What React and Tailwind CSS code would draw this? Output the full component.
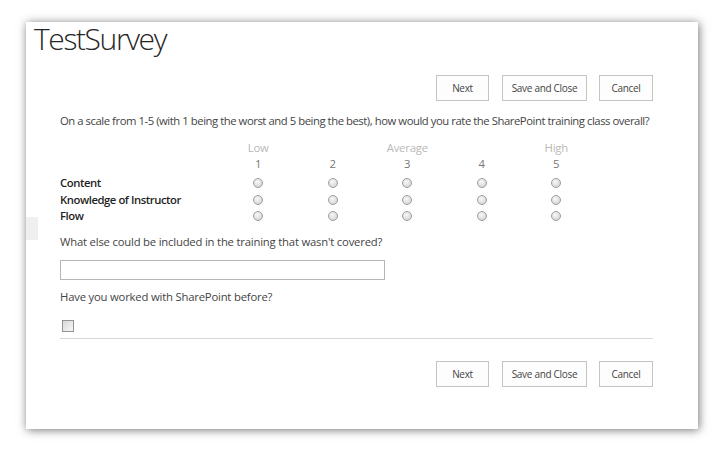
import React from "react";

const font = { fontFamily: '"Open Sans", "Noto Sans", sans-serif' };

function Buttons() {
  return (
    <div className="flex justify-end text-[10px] tracking-[-0.3px] text-[#444]">
      <button className="w-[53px] h-[26px] border border-[#c4c4c4] bg-[#fdfdfd]">
        Next
      </button>
      <button className="ml-[13px] w-[85px] h-[26px] border border-[#c4c4c4] bg-[#fdfdfd]">
        Save and Close
      </button>
      <button className="ml-[12px] w-[54px] h-[26px] border border-[#c4c4c4] bg-[#fdfdfd]">
        Cancel
      </button>
    </div>
  );
}

function Radio() {
  return (
    <div className="flex justify-center items-center">
      <span className="block w-[10px] h-[10px] rounded-full border border-[#9c9c9c] bg-[radial-gradient(circle_at_40%_35%,#f8f8f8,#cdcdcd)]" />
    </div>
  );
}

const rows = ["Content", "Knowledge of Instructor", "Flow"];

function App() {
  return (
    <div className="w-[728px] h-[453px] bg-white pt-[22px] pl-[26px]" style={font}>
      <div className="relative w-[672px] h-[407px] bg-white shadow-[1px_1px_9px_rgba(0,0,0,0.55)]">
        <div className="absolute left-0 top-[195px] w-[12px] h-[23px] bg-[#efefef]" />

        <h1 className="pt-[1px] pl-[8px] text-[30px] leading-[32px] tracking-[-1.4px] font-light text-[#262626]">
          TestSurvey
        </h1>

        <div className="pl-[34px] pr-[45px] text-[11.3px] tracking-[-0.2px]">
          <div className="mt-[20px]">
            <Buttons />
          </div>

          <p className="mt-[12px] leading-[16px] whitespace-nowrap tracking-[-0.45px] text-[#444]">
            On a scale from 1-5 (with 1 being the worst and 5 being the best), how would you rate the SharePoint training class overall?
          </p>

          <div className="mt-[11px] grid grid-cols-[161px_repeat(5,74.5px)]">
            <div className="h-[16px]" />
            <div className="text-center leading-[16px] text-[#b8b8b8]">Low</div>
            <div />
            <div className="text-center leading-[16px] text-[#b8b8b8]">Average</div>
            <div />
            <div className="text-center leading-[16px] text-[#b8b8b8]">High</div>

            <div className="h-[19px]" />
            {[1, 2, 3, 4, 5].map((n) => (
              <div key={n} className="text-center leading-[16px] text-[#777]">
                {n}
              </div>
            ))}

            {rows.map((r) => (
              <React.Fragment key={r}>
                <div className="h-[16.5px] leading-[16.5px] font-semibold tracking-[-0.45px] whitespace-nowrap text-[#1f1f1f]">
                  {r}
                </div>
                <Radio />
                <Radio />
                <Radio />
                <Radio />
                <Radio />
              </React.Fragment>
            ))}
          </div>

          <p className="mt-[9.5px] leading-[16px] text-[#444]">
            What else could be included in the training that wasn't covered?
          </p>
          <div className="mt-[10px] w-[325px] h-[20px] border border-[#b5b5b5] bg-white" />

          <p className="mt-[9px] leading-[16px] text-[#444]">
            Have you worked with SharePoint before?
          </p>
          <div className="mt-[15px] ml-[2px] w-[12px] h-[12px] border border-[#939393] bg-[linear-gradient(135deg,#d8d8d8,#f7f7f7)]" />

          <div className="mt-[6px] border-t border-[#d6d6d6]" />

          <div className="mt-[22px]">
            <Buttons />
          </div>
        </div>
      </div>
    </div>
  );
}

export default App;
